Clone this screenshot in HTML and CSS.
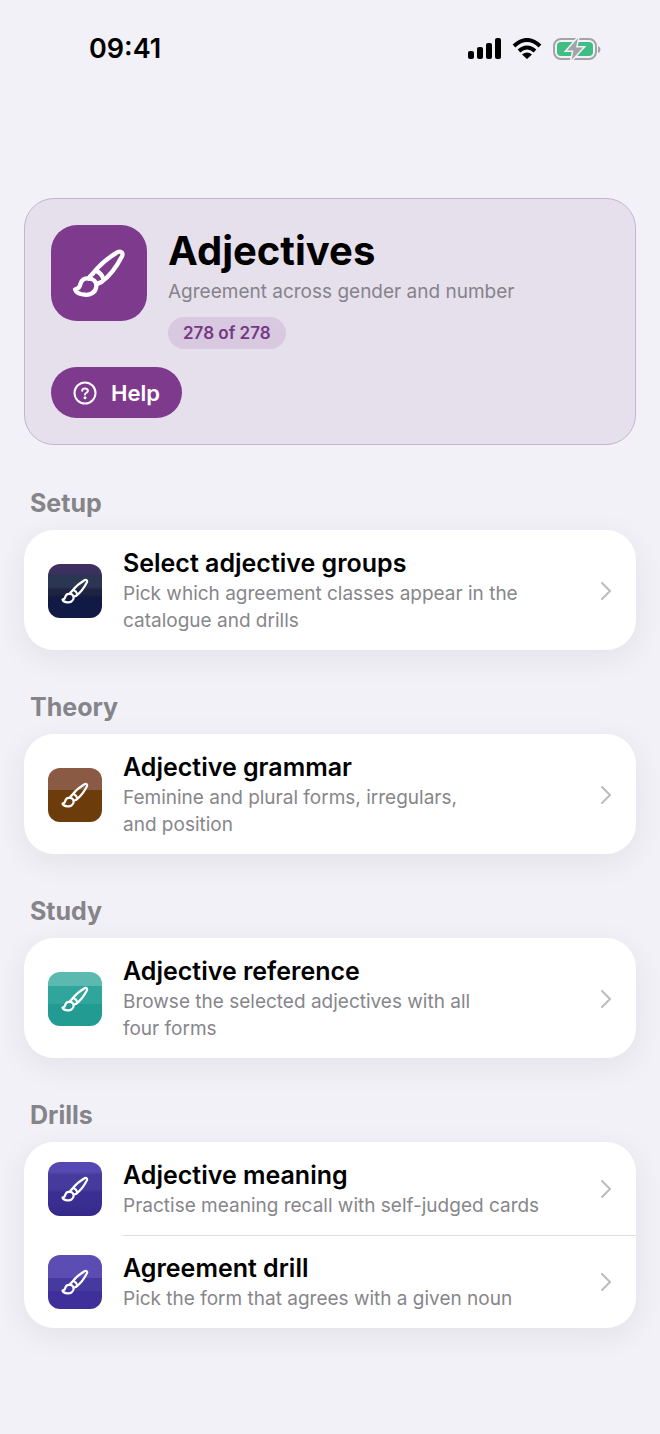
FILE: index.html
```html
<!DOCTYPE html>
<html lang="en">
<head>
<meta charset="utf-8">
<meta name="viewport" content="width=device-width, initial-scale=1">
<title>Adjectives</title>
<link rel="stylesheet" href="styles.css">
</head>
<body>
<svg class="defs" aria-hidden="true">
  <symbol id="brush" viewBox="96 114 164 152">
    <path d="M159 192C180 165 206 143 236 126C246 122 252 130 248 139C232 170 212 198 186 217"/>
    <path d="M170 184Q186 191 192 209M159 192Q149 199 147 207M186 217Q178 222 170 223"/>
    <path d="M147 207C160 206 172 217 170 231C168 250 150 258 134 256C120 255 108 249 105 240C116 239 120 232 122 222C126 210 136 205 147 207Z"/>
  </symbol>
  <symbol id="chevron" viewBox="0 0 12 18"><path d="M2 1L10 9L2 17"/></symbol>
</svg>
<header class="status">
  <time class="clock">09:41</time>
  <div class="indicators">
    <svg class="signal" viewBox="0 0 33 22" aria-label="Signal"><rect x="0" y="13" width="6" height="8" rx="2"/><rect x="9" y="9" width="6" height="12" rx="2"/><rect x="18" y="5" width="6" height="16" rx="2"/><rect x="27" y="0" width="6" height="21" rx="2"/></svg>
    <svg class="wifi" viewBox="0 0 30 22" aria-label="Wi-Fi"><path class="arc" d="M2 8Q15 -4 28 8M7 13Q15 6 23 13"/><path d="M10 16.500Q15 12.500 20 16.500L15 21Z"/></svg>
    <svg class="battery" viewBox="0 0 48 24" aria-label="Battery charging"><rect class="shell" x="1" y="2" width="42" height="20" rx="7"/><path class="cap" d="M45 9Q47.500 10 47.500 12.500Q47.500 15 45 16Z"/><rect class="level" x="4" y="5" width="36" height="14" rx="4"/><path class="bolt" d="M25 1L14 13.500H20.500L18.500 23L30 10.500H23Z"/></svg>
  </div>
</header>
<main class="page">
  <section class="hero">
    <div class="hero-top">
      <span class="hero-tile"><svg><use href="#brush"/></svg></span>
      <div class="hero-text">
        <h1>Adjectives</h1>
        <p>Agreement across gender and number</p>
        <span class="badge">278 of 278</span>
      </div>
    </div>
    <button class="help" type="button">
      <svg viewBox="0 0 24 24"><circle cx="12" cy="12" r="10.500"/><path d="M9.200 9.700C9.300 6.800 14.900 6.700 14.900 9.800C14.900 11.700 12 11.800 12 13.600"/><circle class="dot" cx="12" cy="16.800" r="1.500"/></svg>
      Help
    </button>
  </section>

  <div class="groups">
    <section>
      <h2>Setup</h2>
      <div class="card">
        <a class="row" href="#groups"><span class="tile navy"><svg><use href="#brush"/></svg></span><span class="copy"><strong>Select adjective groups</strong><span class="detail">Pick which agreement classes appear in the catalogue and drills</span></span><svg class="chevron"><use href="#chevron"/></svg></a>
      </div>
    </section>
    <section>
      <h2>Theory</h2>
      <div class="card">
        <a class="row" href="#grammar"><span class="tile brown"><svg><use href="#brush"/></svg></span><span class="copy"><strong>Adjective grammar</strong><span class="detail">Feminine and plural forms, irregulars, and&nbsp;position</span></span><svg class="chevron"><use href="#chevron"/></svg></a>
      </div>
    </section>
    <section>
      <h2>Study</h2>
      <div class="card">
        <a class="row" href="#reference"><span class="tile teal"><svg><use href="#brush"/></svg></span><span class="copy"><strong>Adjective reference</strong><span class="detail">Browse the selected adjectives with all four&nbsp;forms</span></span><svg class="chevron"><use href="#chevron"/></svg></a>
      </div>
    </section>
    <section>
      <h2>Drills</h2>
      <div class="card">
        <a class="row" href="#meaning"><span class="tile indigo"><svg><use href="#brush"/></svg></span><span class="copy"><strong>Adjective meaning</strong><span class="detail">Practise meaning recall with self-judged cards</span></span><svg class="chevron"><use href="#chevron"/></svg></a>
        <a class="row" href="#agreement"><span class="tile violet"><svg><use href="#brush"/></svg></span><span class="copy"><strong>Agreement drill</strong><span class="detail">Pick the form that agrees with a given noun</span></span><svg class="chevron"><use href="#chevron"/></svg></a>
      </div>
    </section>
  </div>
</main>
</body>
</html>
```
FILE: styles.css
```css
* { box-sizing: border-box; margin: 0; }
body { background: #f2f1f7; color: #000; font-family: Inter, "Liberation Sans", sans-serif; }
.defs { position: absolute; width: 0; height: 0; }

.status { display: flex; justify-content: space-between; align-items: center; height: 98px; padding: 0 59px 0 89px; }
.clock { font-size: 27px; font-weight: 600; line-height: 32px; }
.indicators { display: flex; align-items: center; gap: 11px; }
.signal { width: 33px; height: 22px; }
.wifi { width: 30px; height: 22px; }
.wifi .arc { fill: none; stroke: #000; stroke-width: 4; }
.battery { width: 48px; height: 24px; }
.shell { fill: none; stroke: #a3a3a8; stroke-width: 2; }
.cap { fill: #a3a3a8; }
.level { fill: #3fbd83; }
.bolt { fill: #a3a3a8; stroke: #f2f1f7; stroke-width: 3; paint-order: stroke; }

.page { padding: 100px 24px 104px; }
.hero { padding: 26px; border: 1px solid #c7b1d5; border-radius: 30px; background: #e6e0ec; }
.hero-top { display: flex; gap: 21px; align-items: flex-start; }
.hero-tile { display: grid; place-items: center; flex: none; width: 96px; height: 96px; border-radius: 26px; background: #7e3b8e; }
.hero-tile svg { width: 54px; height: 50px; }
.hero-tile svg, .tile svg { fill: none; stroke: #fff; stroke-width: 13; stroke-linecap: round; stroke-linejoin: round; }
h1 { font-size: 40px; font-weight: 700; line-height: 52px; }
.hero-text p { font-size: 19px; line-height: 30px; color: #85838a; }
.badge { display: block; width: fit-content; margin-top: 10px; padding: 0 15px; border-radius: 16px; background: #d8c9e0; color: #753884; font-size: 17px; font-weight: 600; line-height: 32px; }
.help { display: flex; align-items: center; gap: 14px; height: 51px; margin-top: 18px; padding: 0 22px; border: 0; border-radius: 26px; background: #7e3b8e; color: #fff; font: 600 22px/28px Inter, "Liberation Sans", sans-serif; }
.help svg { width: 24px; height: 24px; fill: none; stroke: #fff; stroke-width: 2; stroke-linecap: round; }
.help .dot { fill: #fff; stroke: none; }

.groups { display: grid; gap: 40px; margin-top: 41px; }
h2 { padding: 0 6px; margin-bottom: 10px; color: #858489; font-size: 25px; font-weight: 700; line-height: 34px; }
.card { border-radius: 30px; background: #fff; box-shadow: 0 8px 32px rgba(30, 25, 60, 0.07); }
.row { display: flex; align-items: center; gap: 21px; padding: 17px 24px 16px; color: inherit; text-decoration: none; position: relative; }
.row + .row::before { content: ""; position: absolute; top: 0; left: 99px; right: 0; height: 1px; background: #dedde1; }
.tile { display: grid; place-items: center; flex: none; width: 54px; height: 54px; border-radius: 12px; }
.tile svg { width: 28px; height: 26px; }
.copy { flex: 1; display: grid; }
.copy strong { font-size: 25px; font-weight: 600; line-height: 33px; }
.detail { max-width: 420px; font-size: 19px; line-height: 27px; color: #87868b; }
.chevron { flex: none; width: 12px; height: 18px; fill: none; stroke: #bcbbc0; stroke-width: 2; stroke-linecap: round; stroke-linejoin: round; }
.navy { background: linear-gradient(#3b3060 0 16%, #2b3653 22% 42%, #1d2340 48% 56%, #101a44 62%); }
.brown { background: linear-gradient(#8a5a45 0 41%, #6c3d0b 41%); }
.teal { background: linear-gradient(#5bb9b0 0 26%, #2fa59c 26% 60%, #229b93 60%); }
.indigo { background: linear-gradient(#5648b2 0 18%, #463a9c 24% 50%, #3a2e92 56% 75%, #34298a); }
.violet { background: linear-gradient(#5c4db5 0 42%, #473a9f 42% 66%, #3f2f9a 66%); }
```
